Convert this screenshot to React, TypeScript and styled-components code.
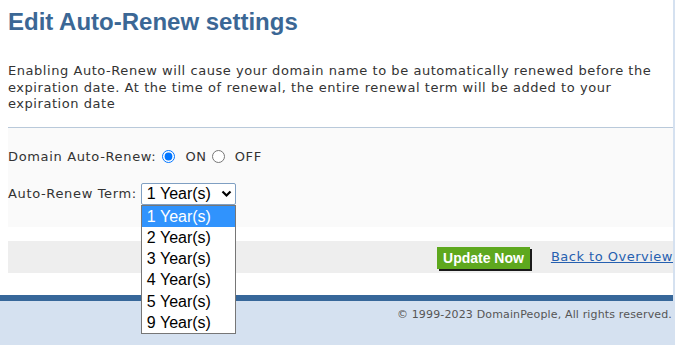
import React, { useState } from 'react'
import styled, { createGlobalStyle } from 'styled-components'

const GlobalStyle = createGlobalStyle`
    html, body {
        margin: 0;
        padding: 0;
        background: #d5e1f0;
    }
    body {
        font-family: "DejaVu Sans", Verdana, sans-serif;
        color: #333;
    }
`

const terms = [1, 2, 3, 4, 5, 9]

const App = () => {
    const [autoRenew, setAutoRenew] = useState(true)
    const [term, setTerm] = useState(1)

    return (
        <>
            <GlobalStyle />
            <Shell>
                <Main>
                    <Content>
                        <Title>Edit Auto-Renew settings</Title>
                        <Intro>
                            Enabling Auto-Renew will cause your domain name to be automatically renewed before the
                            expiration date. At the time of renewal, the entire renewal term will be added to your
                            expiration date
                        </Intro>
                        <FormPanel>
                            <FieldRow>
                                Domain Auto-Renew:
                                <Radio type="radio" name="renew" checked={autoRenew} onChange={() => setAutoRenew(true)} />
                                <RadioText>ON</RadioText>
                                <Radio type="radio" name="renew" checked={!autoRenew} onChange={() => setAutoRenew(false)} />
                                <RadioText>OFF</RadioText>
                            </FieldRow>
                            <FieldRow>
                                Auto-Renew Term:
                                <SelectWrap>
                                    <SelectBox>
                                        {term} Year(s)
                                        <svg width="11" height="8" viewBox="0 0 11 8">
                                            <path d="M1.5 1.5 L5.5 5.5 L9.5 1.5" fill="none" stroke="#000" strokeWidth="2.2" />
                                        </svg>
                                    </SelectBox>
                                    <OptionList>
                                        {terms.map(t => (
                                            <Option key={t} selected={t === term} onClick={() => setTerm(t)}>
                                                {t} Year(s)
                                            </Option>
                                        ))}
                                    </OptionList>
                                </SelectWrap>
                            </FieldRow>
                        </FormPanel>
                        <ActionBar>
                            <UpdateButton>Update Now</UpdateButton>
                            <BackLink href="#">Back to Overview</BackLink>
                        </ActionBar>
                    </Content>
                    <Stripe />
                    <Footer>© 1999-2023 DomainPeople, All rights reserved.</Footer>
                </Main>
            </Shell>
        </>
    )
}

export default App

const Shell = styled.div`
    display: flex;
    min-height: 100vh;
    background: #d5e1f0;
`

const Main = styled.div`
    width: 673px;
    flex-shrink: 0;
    display: flex;
    flex-direction: column;
`

const Content = styled.div`
    background: #fff;
    padding: 8px 0 22px 8px;
`

const Title = styled.h1`
    margin: 0;
    font-family: "Liberation Sans", Arial, sans-serif;
    font-size: 24px;
    line-height: 27px;
    font-weight: bold;
    color: #3b6795;
`

const Intro = styled.p`
    margin: 28px 0 14px;
    font-size: 13px;
    line-height: 16.5px;
    letter-spacing: 0.55px;
    color: #333;
`

const FormPanel = styled.div`
    display: flex;
    flex-direction: column;
    gap: 16px;
    padding: 19px 0 22px;
    border-top: 1px solid #b9c9da;
    background: #fafafa;
`

const FieldRow = styled.div`
    display: flex;
    align-items: center;
    min-height: 20px;
    font-size: 13px;
    letter-spacing: 0.65px;
    color: #333;
`

const Radio = styled.input`
    width: 13px;
    height: 13px;
    margin: 0 3px 0 6px;
    accent-color: #0075ff;

    & + span + & {
        margin-left: 5px;
    }
`

const RadioText = styled.span`
    margin-left: 7px;
`

const SelectWrap = styled.div`
    position: relative;
    margin-left: 4px;
    letter-spacing: 0;
`

const SelectBox = styled.div`
    box-sizing: border-box;
    width: 95px;
    height: 22px;
    display: flex;
    align-items: center;
    justify-content: space-between;
    padding: 0 3px 0 5px;
    border: 1px solid #7f9fc2;
    border-radius: 2px;
    background: #fff;
    font-family: "Liberation Sans", Arial, sans-serif;
    font-size: 16px;
    color: #000;
`

const OptionList = styled.div`
    position: absolute;
    top: 100%;
    left: 0;
    width: 95px;
    box-sizing: border-box;
    border: 1px solid #767676;
    background: #fff;
    z-index: 2;
`

const Option = styled.div<{ selected: boolean }>`
    height: 21.3px;
    line-height: 21.3px;
    padding-left: 5px;
    font-family: "Liberation Sans", Arial, sans-serif;
    font-size: 16px;
    color: ${p => (p.selected ? '#fff' : '#000')};
    background: ${p => (p.selected ? '#3093fd' : '#fff')};
`

const ActionBar = styled.div`
    margin-top: 14px;
    height: 32px;
    background: #eeeeee;
    display: flex;
    align-items: center;
    justify-content: flex-end;
    gap: 21px;
`

const UpdateButton = styled.button`
    height: 22px;
    padding: 0 6px;
    margin-top: 2px;
    border: none;
    background: #5ea81e;
    color: #fff;
    font-family: "Liberation Sans", Arial, sans-serif;
    font-size: 14px;
    font-weight: bold;
    box-shadow: 2px 2px 0 #1a1a1a;
    cursor: pointer;
`

const BackLink = styled.a`
    font-size: 13px;
    letter-spacing: 0.5px;
    color: #2660b0;
    text-decoration: underline;
    white-space: nowrap;
`

const Stripe = styled.div`
    height: 6px;
    background: #37679a;
`

const Footer = styled.div`
    background: #d5e1f0;
    text-align: right;
    padding: 7px 1px 0 0;
    font-size: 11px;
    letter-spacing: 0.15px;
    color: #555;
`
